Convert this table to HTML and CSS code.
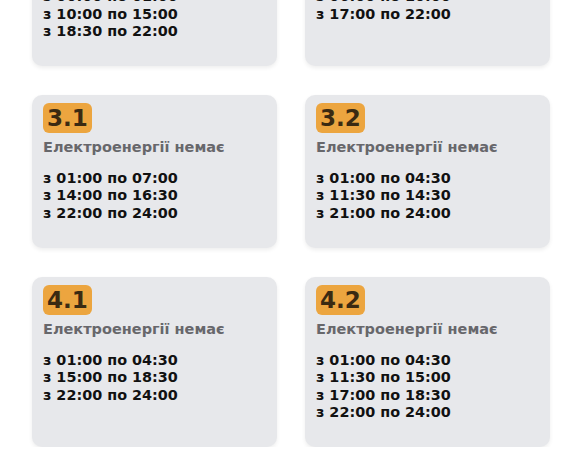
FILE: index.html
```html
<!DOCTYPE html>
<html lang="uk">
<head>
<meta charset="utf-8">
<title>Графік відключень</title>
<link rel="stylesheet" href="styles.css">
</head>
<body>
<main class="grid">
  <section class="card">
    <div class="badge">2.1</div>
    <div class="subtitle">Електроенергії немає</div>
    <ul class="times">
      <li>з 00:00 по 01:00</li>
      <li>з 10:00 по 15:00</li>
      <li>з 18:30 по 22:00</li>
    </ul>
  </section>
  <section class="card">
    <div class="badge">2.2</div>
    <div class="subtitle">Електроенергії немає</div>
    <ul class="times">
      <li>з 06:00 по 10:00</li>
      <li>з 17:00 по 22:00</li>
    </ul>
  </section>
  <section class="card">
    <div class="badge">3.1</div>
    <div class="subtitle">Електроенергії немає</div>
    <ul class="times">
      <li>з 01:00 по 07:00</li>
      <li>з 14:00 по 16:30</li>
      <li>з 22:00 по 24:00</li>
    </ul>
  </section>
  <section class="card">
    <div class="badge">3.2</div>
    <div class="subtitle">Електроенергії немає</div>
    <ul class="times">
      <li>з 01:00 по 04:30</li>
      <li>з 11:30 по 14:30</li>
      <li>з 21:00 по 24:00</li>
    </ul>
  </section>
  <section class="card">
    <div class="badge">4.1</div>
    <div class="subtitle">Електроенергії немає</div>
    <ul class="times">
      <li>з 01:00 по 04:30</li>
      <li>з 15:00 по 18:30</li>
      <li>з 22:00 по 24:00</li>
    </ul>
  </section>
  <section class="card">
    <div class="badge">4.2</div>
    <div class="subtitle">Електроенергії немає</div>
    <ul class="times">
      <li>з 01:00 по 04:30</li>
      <li>з 11:30 по 15:00</li>
      <li>з 17:00 по 18:30</li>
      <li>з 22:00 по 24:00</li>
    </ul>
  </section>
</main>
</body>
</html>
```

FILE: styles.css
```css
html, body {
  margin: 0;
  padding: 0;
  background: #ffffff;
  overflow: hidden;
}

body {
  font-family: "DejaVu Sans", "Noto Sans", sans-serif;
  font-weight: bold;
  color: #111111;
}

.grid {
  display: grid;
  grid-template-columns: 1fr 1fr;
  gap: 29px 28px;
  padding: 0 32px;
  margin-top: -87px;
}

.card {
  background: #e7e8eb;
  border-radius: 10px;
  padding: 8px 11px 12px;
  box-shadow: 0 2px 4px rgba(0, 0, 0, 0.07);
  display: flex;
  flex-direction: column;
  align-items: flex-start;
}

.badge {
  background: #eca53f;
  color: #3a2a12;
  font-size: 23px;
  line-height: 30px;
  padding: 0 4px;
  border-radius: 6px;
}

.subtitle {
  margin-top: 6px;
  font-size: 14.5px;
  line-height: 17px;
  color: #67676b;
}

.times {
  list-style: none;
  margin: 14px 0 13px;
  padding: 0;
  font-size: 14.4px;
  line-height: 17.6px;
}
```
